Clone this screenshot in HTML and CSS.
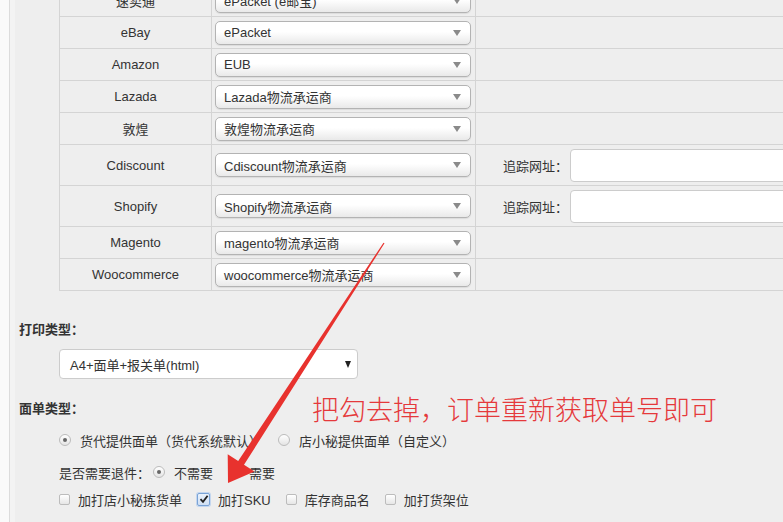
FILE: index.html
```html
<!DOCTYPE html>
<html lang="zh-CN">

<head>
    <meta charset="UTF-8">
    <title>物流设置</title>
    <link rel="stylesheet" href="styles.css">
</head>

<body>
    <div class="page">
        <!-- Carrier per platform -->
        <div class="carrier-table">
            <div class="row">
                <div class="platform">速卖通</div>
                <div class="carrier"><div class="select"><span>ePacket (e邮宝)</span><i class="caret"></i></div></div>
                <div class="extra"></div>
            </div>
            <div class="row">
                <div class="platform">eBay</div>
                <div class="carrier"><div class="select"><span>ePacket</span><i class="caret"></i></div></div>
                <div class="extra"></div>
            </div>
            <div class="row">
                <div class="platform">Amazon</div>
                <div class="carrier"><div class="select"><span>EUB</span><i class="caret"></i></div></div>
                <div class="extra"></div>
            </div>
            <div class="row">
                <div class="platform">Lazada</div>
                <div class="carrier"><div class="select"><span>Lazada物流承运商</span><i class="caret"></i></div></div>
                <div class="extra"></div>
            </div>
            <div class="row">
                <div class="platform">敦煌</div>
                <div class="carrier"><div class="select"><span>敦煌物流承运商</span><i class="caret"></i></div></div>
                <div class="extra"></div>
            </div>
            <div class="row tall">
                <div class="platform">Cdiscount</div>
                <div class="carrier"><div class="select"><span>Cdiscount物流承运商</span><i class="caret"></i></div></div>
                <div class="extra"><span>追踪网址：</span><div class="url-input"></div></div>
            </div>
            <div class="row tall">
                <div class="platform">Shopify</div>
                <div class="carrier"><div class="select"><span>Shopify物流承运商</span><i class="caret"></i></div></div>
                <div class="extra"><span>追踪网址：</span><div class="url-input"></div></div>
            </div>
            <div class="row">
                <div class="platform">Magento</div>
                <div class="carrier"><div class="select"><span>magento物流承运商</span><i class="caret"></i></div></div>
                <div class="extra"></div>
            </div>
            <div class="row">
                <div class="platform">Woocommerce</div>
                <div class="carrier"><div class="select"><span>woocommerce物流承运商</span><i class="caret"></i></div></div>
                <div class="extra"></div>
            </div>
        </div>

        <!-- Print type -->
        <div class="section-title">打印类型：</div>
        <div class="print-select"><span>A4+面单+报关单(html)</span><i class="caret dark"></i></div>

        <!-- Label type -->
        <div class="section-title second">面单类型：</div>
        <div class="option-row first">
            <span class="option"><i class="radio checked"></i>货代提供面单（货代系统默认）</span>
            <span class="option"><i class="radio"></i>店小秘提供面单（自定义）</span>
        </div>
        <div class="option-row return">
            <span class="option-label">是否需要退件：</span>
            <span class="option"><i class="radio checked"></i>不需要</span>
            <span class="option"><i class="radio"></i>需要</span>
        </div>
        <div class="option-row checks">
            <span class="option"><i class="checkbox"></i>加打店小秘拣货单</span>
            <span class="option"><i class="checkbox checked">
                <svg viewBox="0 0 10 10" width="10" height="10"><path d="M1.5 5.2 L4 7.8 L8.6 1.8" fill="none" stroke="#222" stroke-width="1.8"/></svg>
            </i>加打SKU</span>
            <span class="option"><i class="checkbox"></i>库存商品名</span>
            <span class="option"><i class="checkbox"></i>加打货架位</span>
        </div>

        <!-- Annotation -->
        <p class="note">把勾去掉，订单重新获取单号即可</p>
    </div>

    <svg class="arrow" viewBox="0 0 783 522" width="783" height="522">
        <polygon fill="#e8322e" points="228,483 254.5,471.6 244,464.8 384.5,243.3 383.5,242.7 238.2,461 227.7,454.2"/>
    </svg>
</body>

</html>
```

FILE: styles.css
```css
body {
    margin: 0;
    background-color: #fafafa;
    font-family: 'Liberation Sans', 'Noto Sans CJK SC', sans-serif;
    font-size: 13px;
    color: #333;
    width: 783px;
    height: 522px;
    overflow: hidden;
    position: relative;
}

.page {
    position: relative;
    display: flow-root; /* keep the table's negative margin inside */
    margin-left: 9px;
    height: 522px;
    border-left: 1px solid #dcdcdc;
    background-color: #eeeeee;
    box-shadow: inset 5px 0 0 #f3f3f3;
}

/* Carrier table */
.carrier-table {
    margin: -15px 0 0 49px;
    width: 1000px;
    border-left: 1px solid #d4d4d4;
}

.row {
    display: flex;
    height: 32px;
    box-sizing: border-box;
    border-bottom: 1px solid #d4d4d4;
}

.row.tall {
    height: 41px;
}

.platform {
    width: 152px;
    box-sizing: border-box;
    border-right: 1px solid #d4d4d4;
    display: flex;
    align-items: center;
    justify-content: center;
}

.carrier {
    width: 264px;
    box-sizing: border-box;
    border-right: 1px solid #d4d4d4;
    padding-left: 3px;
    display: flex;
    align-items: center;
}

.select {
    width: 256px;
    height: 24px;
    box-sizing: border-box;
    border: 1px solid #b3b3b3;
    border-radius: 5px;
    background: linear-gradient(#ffffff, #ffffff 45%, #e9e9e9);
    box-shadow: 0 1px 1px rgba(0, 0, 0, 0.08);
    padding-left: 8px;
    display: flex;
    align-items: center;
    justify-content: space-between;
}

.caret {
    width: 0;
    height: 0;
    border-left: 4px solid transparent;
    border-right: 4px solid transparent;
    border-top: 6px solid #8a8a8a;
    margin-right: 9px;
}

.caret.dark {
    border-left-width: 3.5px;
    border-right-width: 3.5px;
    border-top: 7px solid #222;
    margin-right: 6px;
}

.extra {
    flex: 1;
    display: flex;
    align-items: center;
    padding-left: 27px;
}

.url-input {
    width: 400px;
    height: 33px;
    margin-left: 2px;
    box-sizing: border-box;
    background-color: white;
    border: 1px solid #cccccc;
    border-radius: 4px;
}

/* Print + label settings */
.section-title {
    padding-left: 9px;
    margin-top: 29px;
    line-height: 20px;
    font-weight: bold;
    color: #333;
}

.section-title.second {
    margin-top: 20px;
}

.print-select {
    margin: 9px 0 0 49px;
    width: 299px;
    height: 30px;
    box-sizing: border-box;
    background-color: white;
    border: 1px solid #cccccc;
    border-radius: 4px;
    padding-left: 10px;
    display: flex;
    align-items: center;
    justify-content: space-between;
    font-size: 13px;
}

.option-row {
    margin-left: 49px;
    height: 20px;
    display: flex;
    align-items: center;
}

.option-row.first {
    margin-top: 11px;
}

.option-row.return {
    margin-top: 12px;
}

.option-row.checks {
    margin-top: 7px;
}

.option {
    display: inline-flex;
    align-items: center;
    gap: 9px;
}

.option-row.first .option {
    margin-right: 16px;
}

.option-row.return .option {
    margin-right: 15px;
}

.option-label {
    margin-right: 3px;
}

.option-row.checks .option {
    margin-right: 15px;
    gap: 8px;
}

.radio {
    width: 12px;
    height: 12px;
    box-sizing: border-box;
    border: 1px solid #bcbcbc;
    border-radius: 50%;
    background: linear-gradient(#ffffff, #e4e4e4);
    display: flex;
    align-items: center;
    justify-content: center;
}

.radio.checked::after {
    content: "";
    width: 4px;
    height: 4px;
    border-radius: 50%;
    background-color: #666;
}

.checkbox {
    width: 11px;
    height: 11px;
    box-sizing: border-box;
    border: 1px solid #bcbcbc;
    border-radius: 2px;
    background: linear-gradient(#ffffff, #e6e6e6);
    display: flex;
    align-items: center;
    justify-content: center;
}

.checkbox.checked {
    width: 13px;
    height: 13px;
    border-color: #7aa3d6;
    background: linear-gradient(#eaf2fc, #cfdff3);
    box-shadow: 0 0 0 1px #c3d6ef;
}

/* Annotation on top of the form */
.note {
    position: absolute;
    left: 302px;
    top: 393px;
    margin: 0;
    font-family: 'Noto Sans CJK SC', sans-serif;
    font-size: 27px;
    font-weight: 300;
    line-height: 32px;
    color: #e5393b;
}

.arrow {
    position: absolute;
    left: 0;
    top: 0;
}
```
